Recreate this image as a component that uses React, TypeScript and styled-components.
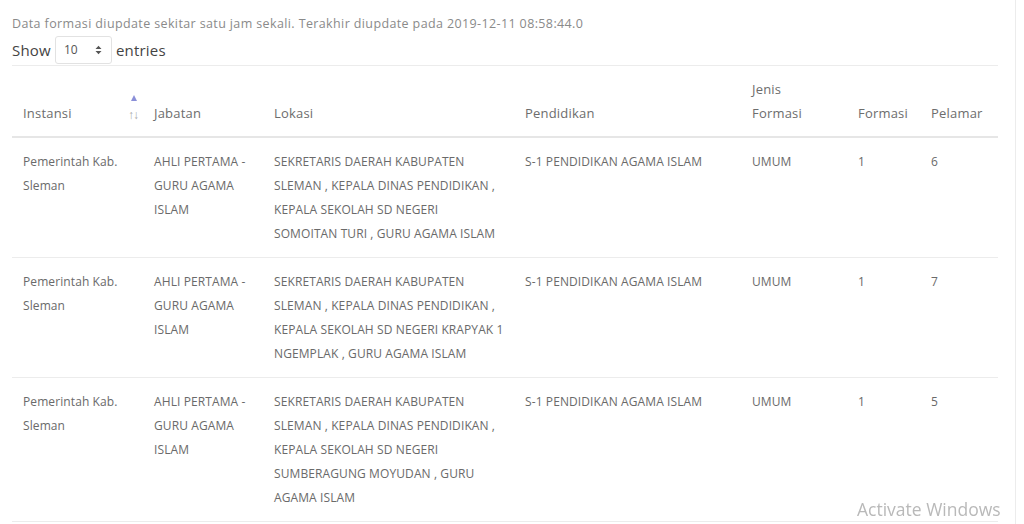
import React from "react";
import styled, { createGlobalStyle } from "styled-components";

const Global = createGlobalStyle`
  html, body { margin: 0; padding: 0; background: #fff; }
  body { font-family: "Open Sans", "Liberation Sans", sans-serif; }
`;

const Page = styled.div`
  width: 1016px;
  min-height: 524px;
  box-sizing: border-box;
  border-right: 1px solid #ececec;
  padding: 14px 18px 0 12px;
`;

const Note = styled.div`
  font-size: 12.5px;
  line-height: 20px;
  color: #8a8a8a;
  letter-spacing: 0.38px;
`;

const ShowRow = styled.div`
  display: flex;
  align-items: center;
  gap: 4px;
  height: 31px;
  font-size: 15px;
  letter-spacing: 0.2px;
  color: #444;
`;

const SelectBox = styled.div`
  width: 57px;
  height: 28px;
  box-sizing: border-box;
  border: 1px solid #e2e2e2;
  border-radius: 3px;
  display: flex;
  align-items: center;
  justify-content: space-between;
  padding: 0 9px 0 8px;
  font-size: 12px;
  letter-spacing: 0;
  color: #555;
`;

const Table = styled.table`
  width: 986px;
  border-collapse: collapse;
  table-layout: fixed;
`;

const Th = styled.th`
  position: relative;
  text-align: left;
  vertical-align: bottom;
  font-weight: 400;
  font-size: 13px;
  letter-spacing: 0.2px;
  line-height: 24px;
  color: #6d6d6d;
  padding: 11px 11px 11px 11px;
  border-top: 1px solid #ececec;
  border-bottom: 2px solid #e6e6e6;
`;

const Td = styled.td`
  vertical-align: top;
  font-size: 12px;
  letter-spacing: 0.1px;
  line-height: 24px;
  color: #6a6a6a;
  padding: 12px 9.5px 11px 11px;
  border-bottom: 1px solid #ececec;
`;

const SortUp = styled.span`
  position: absolute;
  right: 6px;
  top: 29px;
  width: 0;
  height: 0;
  border-left: 3.5px solid transparent;
  border-right: 3.5px solid transparent;
  border-bottom: 6px solid #8a8fd8;
`;

const SortArrows = styled.span`
  position: absolute;
  right: 5px;
  bottom: 15px;
  font-size: 12px;
  line-height: 12px;
  color: #aaaaaa;
  letter-spacing: -1px;
`;

const Watermark = styled.div`
  position: fixed;
  left: 857px;
  top: 497px;
  font-family: "Open Sans", "Noto Sans", sans-serif;
  font-size: 17.5px;
  color: #b9b9b9;
`;

const rows = [
  {
    lokasi: "SEKRETARIS DAERAH KABUPATEN SLEMAN , KEPALA DINAS PENDIDIKAN , KEPALA SEKOLAH SD NEGERI SOMOITAN TURI , GURU AGAMA ISLAM",
    pelamar: "6",
  },
  {
    lokasi: "SEKRETARIS DAERAH KABUPATEN SLEMAN , KEPALA DINAS PENDIDIKAN , KEPALA SEKOLAH SD NEGERI KRAPYAK 1 NGEMPLAK , GURU AGAMA ISLAM",
    pelamar: "7",
  },
  {
    lokasi: "SEKRETARIS DAERAH KABUPATEN SLEMAN , KEPALA DINAS PENDIDIKAN , KEPALA SEKOLAH SD NEGERI SUMBERAGUNG MOYUDAN , GURU AGAMA ISLAM",
    pelamar: "5",
  },
];

const widths = [131, 120, 251, 227, 106, 73, 78];

export default function App() {
  return (
    <>
      <Global />
      <Page>
        <Note>Data formasi diupdate sekitar satu jam sekali. Terakhir diupdate pada 2019-12-11 08:58:44.0</Note>
        <ShowRow>
          <span>Show</span>
          <SelectBox>
            <span>10</span>
            <svg width="7" height="10" viewBox="0 0 7 10">
              <path d="M0.5 4 L3.5 0.8 L6.5 4 Z M0.5 6 L3.5 9.2 L6.5 6 Z" fill="#555" />
            </svg>
          </SelectBox>
          <span>entries</span>
        </ShowRow>
        <Table>
          <colgroup>
            {widths.map((w, i) => (
              <col key={i} style={{ width: w }} />
            ))}
          </colgroup>
          <thead>
            <tr>
              <Th>
                Instansi
                <SortUp />
                <SortArrows>↑↓</SortArrows>
              </Th>
              <Th>Jabatan</Th>
              <Th>Lokasi</Th>
              <Th>Pendidikan</Th>
              <Th>Jenis<br />Formasi</Th>
              <Th>Formasi</Th>
              <Th>Pelamar</Th>
            </tr>
          </thead>
          <tbody>
            {rows.map((r, i) => (
              <tr key={i}>
                <Td>Pemerintah Kab. Sleman</Td>
                <Td>AHLI PERTAMA - GURU AGAMA ISLAM</Td>
                <Td>{r.lokasi}</Td>
                <Td>S-1 PENDIDIKAN AGAMA ISLAM</Td>
                <Td>UMUM</Td>
                <Td>1</Td>
                <Td>{r.pelamar}</Td>
              </tr>
            ))}
          </tbody>
        </Table>
      </Page>
      <Watermark>Activate Windows</Watermark>
    </>
  );
}
